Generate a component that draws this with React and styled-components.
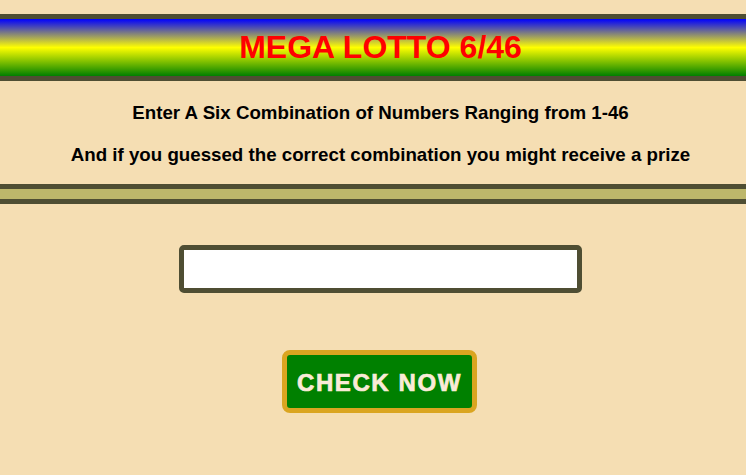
import React from "react";
import styled, { createGlobalStyle } from "styled-components";

const GlobalStyle = createGlobalStyle`
  body {
    margin: 0;
    background-color: #f5deb3;
    font-family: "Liberation Sans", Arial, sans-serif;
  }
`;

const Page = styled.div`
  min-height: 472px;
  border-bottom: 5px solid #4f4e33;
  display: flex;
  flex-direction: column;
  padding-top: 14px;
`;

const Header = styled.header`
  height: 57px;
  border-top: 5px solid #4f4e33;
  border-bottom: 5px solid #4f4e33;
  background: linear-gradient(#0000ff, #ffff00, #008000);
  display: flex;
  align-items: center;
  justify-content: center;
  padding-left: 15px;
`;

const Title = styled.h1`
  margin: 0;
  font-size: 32px;
  font-weight: bold;
  color: #ff0000;
`;

const Intro = styled.section`
  display: flex;
  flex-direction: column;
  align-items: center;
  gap: 20px;
  padding: 21px 0 18px 15px;
`;

const Line = styled.p`
  margin: 0;
  font-size: 18.72px;
  line-height: 22px;
  font-weight: bold;
  color: #000;
`;

const DoubleRule = styled.hr`
  margin: 0;
  height: 10px;
  border: none;
  border-top: 5px solid #4f4e33;
  border-bottom: 5px solid #4f4e33;
  background-color: #bdb76b;
`;

const Form = styled.form`
  display: flex;
  flex-direction: column;
  align-items: center;
  gap: 57px;
  padding: 41px 0 0 15px;
`;

const NumberInput = styled.input`
  box-sizing: border-box;
  width: 403px;
  height: 48px;
  border: 5px solid #4f4e33;
  border-radius: 5px;
  background: #fff;
  font-size: 18px;
  padding: 0 8px;
  outline: none;
`;

const CheckButton = styled.button`
  box-sizing: border-box;
  width: 195px;
  height: 63px;
  margin-left: -2px;
  background-color: #008000;
  border: 5px solid #daa520;
  border-radius: 8px;
  color: #faebd7;
  font-family: "Liberation Sans", Arial, sans-serif;
  font-size: 24px;
  font-weight: bold;
  letter-spacing: 1.6px;
  -webkit-text-stroke: 0.7px #faebd7;
  padding: 2px 0 0;
  cursor: pointer;
`;

const App = () => {
  return (
    <>
      <GlobalStyle />
      <Page>
        <Header>
          <Title>MEGA LOTTO 6/46</Title>
        </Header>
        <Intro>
          <Line>Enter A Six Combination of Numbers Ranging from 1-46</Line>
          <Line>And if you guessed the correct combination you might receive a prize</Line>
        </Intro>
        <DoubleRule />
        <Form onSubmit={(e) => e.preventDefault()}>
          <NumberInput type="text" />
          <CheckButton type="submit">CHECK NOW</CheckButton>
        </Form>
      </Page>
    </>
  );
};

export default App;
